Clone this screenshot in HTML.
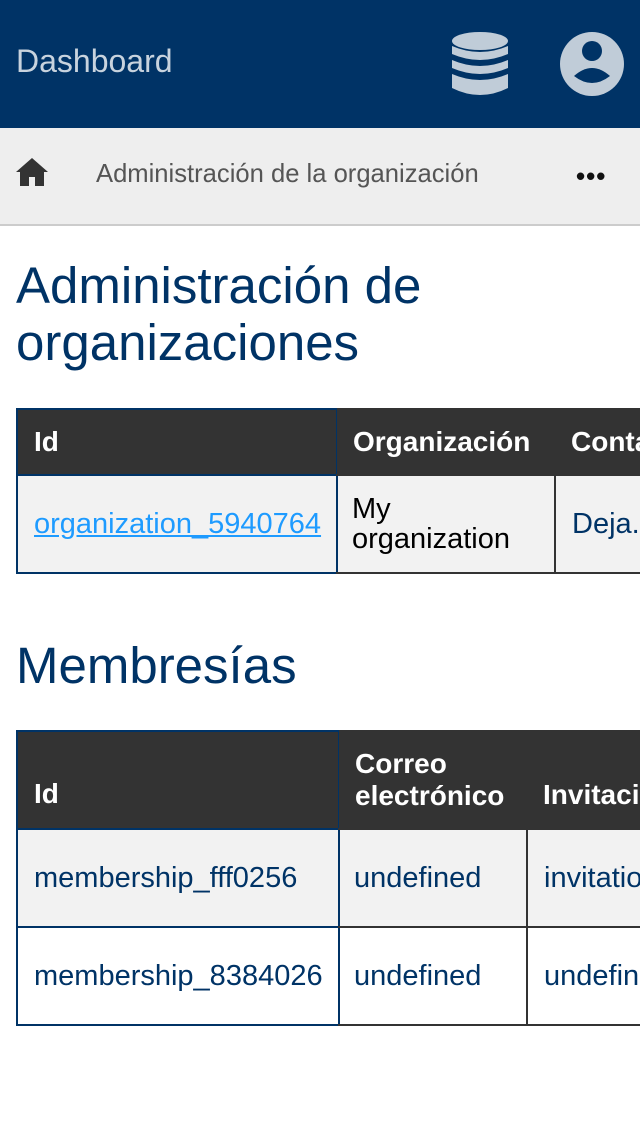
<!DOCTYPE html>
<html><head><meta charset="utf-8"><style>
*{margin:0;padding:0;box-sizing:border-box}
html,body{width:640px;height:1136px;overflow:hidden}
body{background:#fff;font-family:"Liberation Sans",sans-serif;position:relative}
#w{position:absolute;left:0;top:0;width:640px;height:1136px;overflow:hidden}
.a{position:absolute}
.c{position:absolute;font-size:29px;color:#003366;padding-left:16px;display:flex;align-items:center;line-height:32px;white-space:nowrap;overflow:hidden}
.c.hd{background:#333;color:#fff;font-weight:bold;font-size:28px}
.n{border:2px solid #003366}
.g{border:2px solid #333}
</style></head><body><div id="w">
<div class="a" style="left:0;top:0;width:640px;height:128px;background:#003366"></div>
<div class="a" style="left:16px;top:43px;font-size:32px;color:#c8d3de">Dashboard</div>
<svg class="a" style="left:452px;top:32px" width="56" height="64" viewBox="0 0 56 64">
<g fill="#c0ccd8"><ellipse cx="28" cy="9" rx="28" ry="9"/><path d="M0 14q28 12 56 0v8q-28 12-56 0z"/><path d="M0 28q28 12 56 0v8q-28 12-56 0z"/><path d="M0 42q28 12 56 0v14q-28 14-56 0z"/></g></svg>
<svg class="a" style="left:560px;top:32px" width="64" height="64" viewBox="0 0 64 64">
<circle cx="32" cy="32" r="32" fill="#c0ccd8"/><circle cx="32" cy="19" r="10" fill="#003366"/><path d="M14 44q18-16 36 0q-18 14-36 0z" fill="#003366"/></svg>
<div class="a" style="left:0;top:128px;width:640px;height:98px;background:#eee;border-bottom:2px solid #ccc"></div>
<svg class="a" style="left:16px;top:158px" width="32" height="28" viewBox="0 0 32 28"><path d="M16 0L0 14h4v14h9v-9h6v9h9V14h4z" fill="#333"/></svg>
<div class="a" style="left:96px;top:160px;font-size:25.6px;color:#555">Administración de la organización</div>
<div class="a" style="left:576px;top:161px;font-size:26px;color:#111;letter-spacing:1px;font-weight:bold">•••</div>
<div class="a" style="left:16px;top:257px;font-size:51px;line-height:57px;color:#003366;white-space:nowrap">Administración de<br>organizaciones</div>
<div class="a" style="left:16px;top:637px;font-size:51px;line-height:57px;color:#003366">Membresías</div>

<div class="a" style="left:16px;top:408px;width:624px;height:67px;background:#333"></div>
<div class="c n hd" style="left:16px;top:408px;width:322px;height:68px">Id</div>
<div class="c hd" style="left:337px;top:408px;width:220px;height:67px">Organización</div>
<div class="c hd" style="left:555px;top:408px;width:100px;height:67px">Contacto</div>
<div class="a" style="left:16px;top:474px;width:624px;height:100px;background:#f2f2f2"></div>
<div class="c n" style="left:16px;top:474px;width:322px;height:100px"><span style="color:#1e9bff;text-decoration:underline">organization_5940764</span></div>
<div class="c g" style="left:336px;top:474px;width:220px;height:100px;color:#000;border-left:none;line-height:30px">My<br>organization</div>
<div class="c g" style="left:554px;top:474px;width:100px;height:100px">Deja...</div>

<div class="a" style="left:16px;top:730px;width:624px;height:99px;background:#333"></div>
<div class="c n hd" style="left:16px;top:730px;width:324px;height:100px;align-items:flex-end;padding-bottom:18px">Id</div>
<div class="c hd" style="left:339px;top:730px;width:190px;height:99px;line-height:32px">Correo<br>electrónico</div>
<div class="c hd" style="left:527px;top:730px;width:130px;height:99px;align-items:flex-end;padding-bottom:18px">Invitación</div>
<div class="a" style="left:16px;top:828px;width:624px;height:100px;background:#f2f2f2"></div>
<div class="c n" style="left:16px;top:828px;width:324px;height:100px">membership_fff0256</div>
<div class="c g" style="left:338px;top:828px;width:190px;height:100px;border-left:none">undefined</div>
<div class="c g" style="left:526px;top:828px;width:130px;height:100px">invitation</div>
<div class="c n" style="left:16px;top:926px;width:324px;height:100px">membership_8384026</div>
<div class="c g" style="left:338px;top:926px;width:190px;height:100px;border-left:none">undefined</div>
<div class="c g" style="left:526px;top:926px;width:130px;height:100px">undefined</div>
</div></body></html>
